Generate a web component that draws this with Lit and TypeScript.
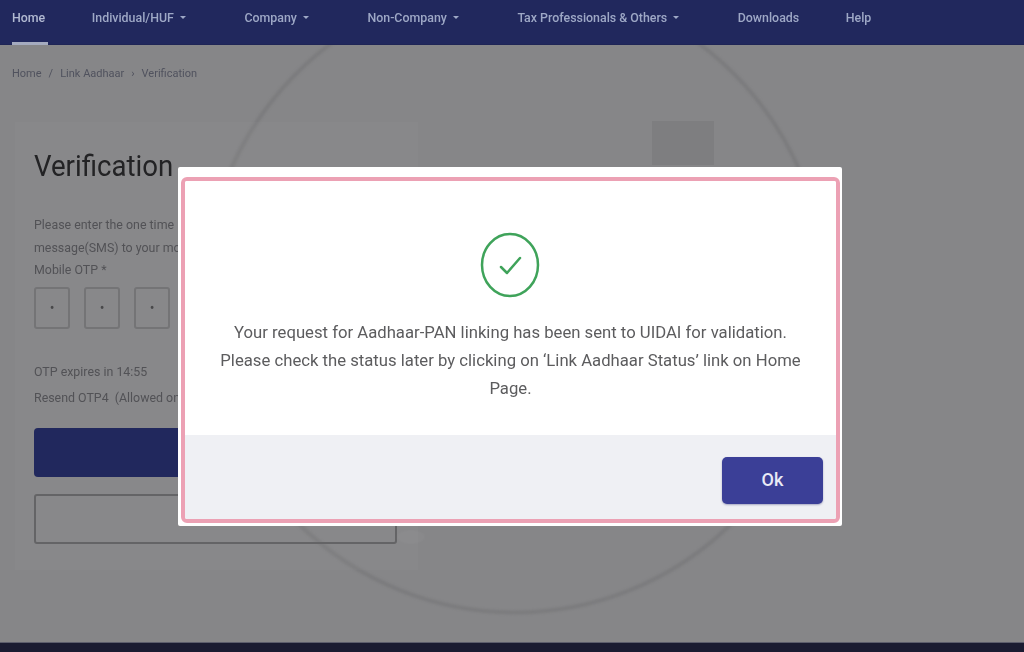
import { LitElement, html, css } from "lit";
import { customElement } from "lit/decorators.js";

const NAV = [
  { label: "Home", caret: false, active: true },
  { label: "Individual/HUF", caret: true },
  { label: "Company", caret: true },
  { label: "Non-Company", caret: true },
  { label: "Tax Professionals & Others", caret: true },
  { label: "Downloads", caret: false },
  { label: "Help", caret: false },
];

@customElement("app-root")
export class AppRoot extends LitElement {
  static styles = css`
    :host {
      display: flex;
      flex-direction: column;
      position: relative;
      width: 1024px;
      height: 652px;
      overflow: hidden;
      background: #868688;
      font-family: Roboto, "Liberation Sans", sans-serif;
    }
    .nav {
      position: relative;
      z-index: 1;
      height: 45px;
      flex: none;
      box-sizing: border-box;
      background: #21285d;
      border-bottom: 1px solid #1f2556;
      display: flex;
      align-items: stretch;
      gap: 46.5px;
      padding-left: 12px;
      color: #9ea8c6;
      font-size: 12.4px;
      font-weight: 500;
    }
    .nav-text {
      filter: blur(0.7px);
    }
    .item {
      display: flex;
      align-items: center;
      gap: 6px;
      height: 35px;
      white-space: nowrap;
    }
    .item.has-caret {
      padding-right: 12px;
    }
    .item.active {
      position: relative;
      color: #b2bad2;
    }
    .item.active::after {
      content: "";
      position: absolute;
      left: 0;
      right: -3px;
      top: 42px;
      height: 3px;
      background: #a5abbf;
      filter: blur(0.4px);
    }
    .caret {
      width: 0;
      height: 0;
      border-left: 3px solid transparent;
      border-right: 3px solid transparent;
      border-top: 3px solid #9ea8c6;
      filter: blur(0.4px);
    }
    .main {
      flex: 1;
      position: relative;
      display: flex;
      flex-direction: column;
    }
    .ring {
      position: absolute;
      left: 190px;
      top: -73px;
      width: 650px;
      height: 650px;
      filter: blur(0.9px);
    }
    .crumbs {
      position: relative;
      display: flex;
      gap: 7px;
      padding: 22px 0 0 12px;
      height: 77px;
      box-sizing: border-box;
      font-size: 11px;
      color: #50525e;
      filter: blur(0.7px);
    }
    .row {
      position: relative;
      display: flex;
      align-items: flex-start;
      padding-left: 15px;
    }
    .card {
      width: 403px;
      height: 448px;
      box-sizing: border-box;
      padding: 25px 21px 0 19px;
      background: rgba(255, 255, 255, 0.025);
      display: flex;
      flex-direction: column;
    }
    .title {
      margin: 0;
      font-size: 30px;
      line-height: 38px;
      font-weight: 400;
      color: #232325;
      filter: blur(0.4px);
      transform: scaleX(0.92);
      transform-origin: left center;
    }
    .copy {
      margin-top: 29px;
      font-size: 12.4px;
      line-height: 22.5px;
      color: #525256;
      white-space: nowrap;
      filter: blur(0.7px);
    }
    .otp {
      display: flex;
      gap: 14px;
      margin-top: 5px;
    }
    .box {
      width: 36px;
      height: 42px;
      box-sizing: border-box;
      border: 2px solid #747476;
      border-radius: 3px;
      display: flex;
      align-items: center;
      justify-content: center;
      color: #48484a;
      font-size: 14px;
      filter: blur(0.6px);
    }
    .meta {
      font-size: 12.4px;
      color: #525256;
      white-space: nowrap;
      filter: blur(0.7px);
      line-height: 16px;
    }
    .meta.first {
      margin-top: 35px;
    }
    .meta.second {
      margin-top: 10px;
    }
    .primary {
      margin-top: 22px;
      height: 49px;
      width: 363px;
      border-radius: 4px;
      background: #21285d;
    }
    .outline {
      margin-top: 17px;
      height: 50px;
      width: 363px;
      box-sizing: border-box;
      border: 2px solid #646466;
      border-radius: 3px;
      filter: blur(0.5px);
    }
    .tile {
      width: 62px;
      height: 44px;
      margin: -1px 0 0 234px;
      background: #7e7e80;
    }
    .blob {
      position: absolute;
      left: 397px;
      top: 408px;
      width: 28px;
      height: 14px;
      border-radius: 50%;
      background: rgba(255, 255, 255, 0.03);
      filter: blur(1px);
    }
    .footer {
      height: 10px;
      flex: none;
      background: #1a1b31;
      border-top: 1px solid #5c5d6c;
      box-sizing: border-box;
    }
    .dialog {
      position: absolute;
      z-index: 2;
      left: 178px;
      top: 167px;
      width: 664px;
      height: 359px;
      box-sizing: border-box;
      padding: 10px 2px 3px 3px;
      background: #fff;
      border-radius: 2px;
    }
    .frame {
      height: 100%;
      box-sizing: border-box;
      border: 4px solid #eca1b4;
      border-radius: 6px;
      display: flex;
      flex-direction: column;
      overflow: hidden;
    }
    .body {
      height: 254px;
      flex: none;
      box-sizing: border-box;
      padding-top: 51px;
      display: flex;
      flex-direction: column;
      align-items: center;
      background: #fff;
    }
    .check {
      display: block;
      width: 60px;
      height: 66px;
      margin-left: -2px;
      filter: blur(0.3px);
    }
    .message {
      margin: 21px 0 0;
      width: 600px;
      font-size: 16.7px;
      line-height: 28px;
      text-align: center;
      color: #5c5c5e;
      filter: blur(0.35px);
    }
    .actions {
      flex: 1;
      display: flex;
      justify-content: flex-end;
      align-items: flex-start;
      padding: 22px 13px 0 0;
      background: #eff0f4;
    }
    .ok {
      width: 101px;
      height: 47px;
      border: none;
      border-radius: 5px;
      background: #3b3f97;
      color: #e9eaf6;
      font: 500 18px Roboto, "Liberation Sans", sans-serif;
      box-shadow: 0 1px 2px rgba(60, 60, 120, 0.4);
      padding: 0 0 2px;
    }
  `;

  render() {
    return html`
      <nav class="nav">
        ${NAV.map(
          (n) => html`<div class="item ${n.active ? "active" : ""} ${n.caret ? "has-caret" : ""}">
            <span class="nav-text">${n.label}</span>
            ${n.caret ? html`<span class="caret"></span>` : ""}
          </div>`
        )}
      </nav>
      <main class="main">
        <svg class="ring" viewBox="0 0 650 650" aria-hidden="true">
          <ellipse cx="325" cy="325.5" rx="311" ry="315" fill="none" stroke="#7c7c7e" stroke-width="4"></ellipse>
        </svg>
        <div class="crumbs">
          <span>Home</span><span>/</span><span>Link Aadhaar</span><span>›</span><span>Verification</span>
        </div>
        <div class="row">
          <section class="card">
            <h1 class="title">Verification</h1>
            <div class="copy">
              Please enter the one time password(OTP) sent via short<br />
              message(SMS) to your mobile number<br />
              Mobile OTP *
            </div>
            <div class="otp">
              <div class="box">•</div>
              <div class="box">•</div>
              <div class="box">•</div>
            </div>
            <div class="meta first">OTP expires in 14:55</div>
            <div class="meta second">Resend OTP4 &nbsp;(Allowed only 3 times)</div>
            <div class="primary"></div>
            <div class="outline"></div>
          </section>
          <div class="tile"></div>
          <div class="blob"></div>
        </div>
      </main>
      <div class="footer"></div>
      <div class="dialog" role="dialog">
        <div class="frame">
          <div class="body">
            <svg class="check" viewBox="0 0 60 66" aria-hidden="true">
              <ellipse cx="30" cy="33" rx="28" ry="31" fill="none" stroke="#3fa35a" stroke-width="2.5"></ellipse>
              <path d="M21 35 L27 41 L40 26" fill="none" stroke="#3fa35a" stroke-width="2.5" stroke-linecap="round" stroke-linejoin="round"></path>
            </svg>
            <p class="message">
              Your request for Aadhaar-PAN linking has been sent to UIDAI for validation. Please check the status later by clicking on ‘Link Aadhaar Status’ link on Home Page.
            </p>
          </div>
          <div class="actions"><button class="ok">Ok</button></div>
        </div>
      </div>
    `;
  }
}
